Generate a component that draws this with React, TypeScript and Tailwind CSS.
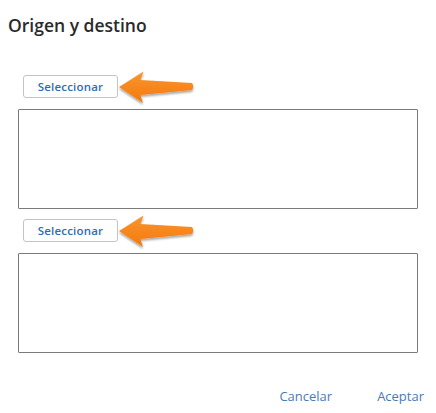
import React from 'react'

function Arrow() {
  return (
    <svg width="80" height="38" viewBox="0 0 80 38" className="shrink-0 -ml-[2px]">
      <defs>
        <linearGradient id="ag" x1="0" y1="0" x2="0" y2="1">
          <stop offset="0" stopColor="#fb9430" />
          <stop offset="1" stopColor="#f27a0c" />
        </linearGradient>
        <filter id="as" x="-20%" y="-30%" width="140%" height="170%">
          <feDropShadow dx="0" dy="2" stdDeviation="1.2" floodColor="#000" floodOpacity="0.35" />
        </filter>
      </defs>
      <path
        d="M3 19 L27.5 3.5 L24.5 12 L76 15 Q78.5 18.5 76 22 L24.5 27 L27 35 Z"
        fill="url(#ag)"
        filter="url(#as)"
        strokeLinejoin="round"
      />
    </svg>
  )
}

function PickRow() {
  return (
    <div className="flex items-center h-[23px] ml-[23px]">
      <button className="h-[23px] w-[95px] rounded-[3px] border border-[#c4c4c4] bg-white text-[11.5px] font-semibold text-[#2f6db3] tracking-[0.2px]">
        Seleccionar
      </button>
      <Arrow />
    </div>
  )
}

function Box() {
  return <textarea className="block ml-[18px] w-[400px] h-[100px] border border-[#7a7a7a] rounded-[1px] resize-none outline-none" />
}

export default function App() {
  return (
    <div className="w-[436px] h-[413px] bg-white" style={{ fontFamily: '"Open Sans", "Liberation Sans", sans-serif' }}>
      <h1 className="pl-[8px] pt-[12px] text-[17.5px] leading-[26px] font-semibold text-[#2a2a2a]">Origen y destino</h1>
      <div className="mt-[37px]">
        <PickRow />
      </div>
      <div className="mt-[11px]">
        <Box />
      </div>
      <div className="mt-[10px]">
        <PickRow />
      </div>
      <div className="mt-[11px]">
        <Box />
      </div>
      <div className="flex justify-end gap-[45px] pr-[12px] mt-[34px] text-[13px] text-[#4a7ab5]">
        <span>Cancelar</span>
        <span>Aceptar</span>
      </div>
    </div>
  )
}
